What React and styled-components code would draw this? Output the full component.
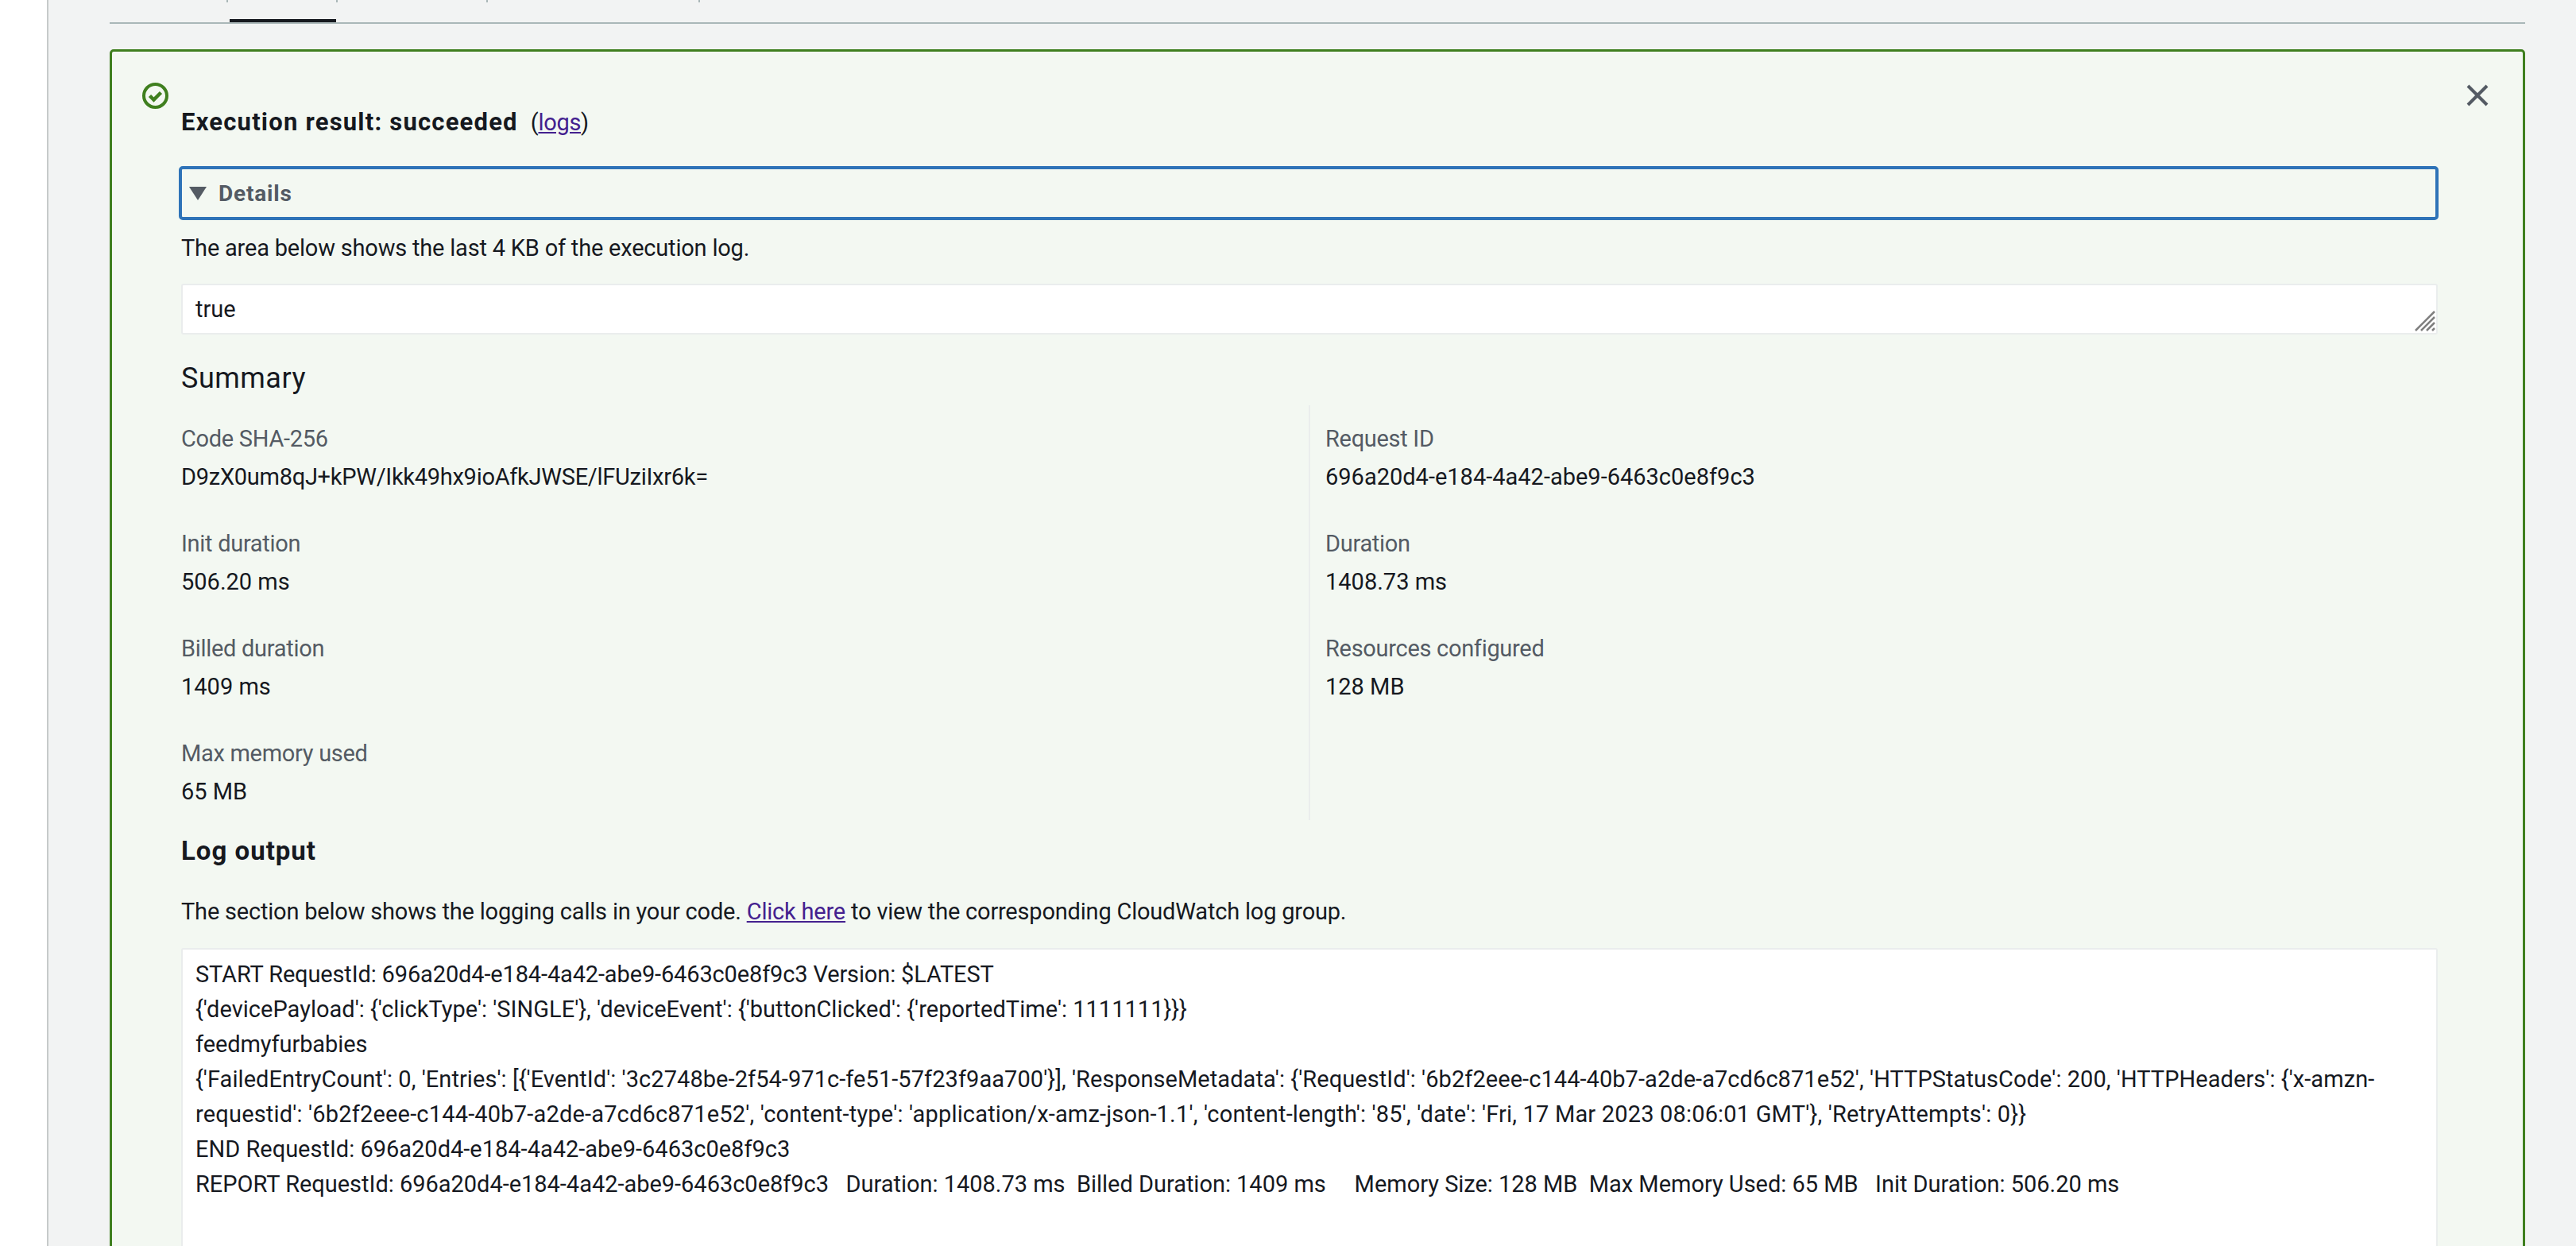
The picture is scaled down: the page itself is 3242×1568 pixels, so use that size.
import React from 'react'
import styled, { createGlobalStyle } from 'styled-components'

const GlobalStyle = createGlobalStyle`
  html, body { margin: 0; padding: 0; background: #fff; }
  body { font-family: Roboto, "Liberation Sans", Arial, sans-serif; color: #16191f; }
`

const Page = styled.div`
  display: flex; width: 3242px; height: 1568px; overflow: hidden;
`
const Nav = styled.div`
  width: 59px; flex: none; background: #fff; border-right: 2px solid #c6caca;
`
const Main = styled.div`
  flex: 1; background: #f2f3f3; padding: 0 64px 0 77px; min-width: 0;
`
const TabBar = styled.div`
  display: flex; height: 28px; border-bottom: 2px solid #aab7b8;
`
const Tab = styled.div`
  position: relative; height: 28px; box-sizing: border-box;
  width: ${p => p.$w}px;
  &::after {
    content: ''; position: absolute; right: 0; top: 0;
    width: 2px; height: 3px; background: #aab7b8;
  }
  ${p => p.$active && `
    &::before {
      content: ''; position: absolute; left: 2px; right: 2px; bottom: 0;
      height: 4px; background: #16191f;
    }
  `}
`
const Flash = styled.div`
  position: relative; margin-top: 32px; box-sizing: border-box; height: 1600px;
  background: #f3f8f2; border: 3px solid #3f7f1f; border-radius: 5px;
  padding: 67px 93px 0 87px;
`
const FlashIcon = styled.svg`
  position: absolute; left: 38px; top: 39px; width: 33px; height: 33px;
`
const CloseIcon = styled.svg`
  position: absolute; right: 41px; top: 39px; width: 32px; height: 32px;
`
const Title = styled.div`
  font-size: 31px; line-height: 44px; font-weight: 700; letter-spacing: 1.2px;
  span { font-size: 29px; font-weight: 400; margin-left: 16px; letter-spacing: -0.3px; }
`
const Link = styled.a`
  color: #44218f; text-decoration: underline;
`
const DetailsBar = styled.div`
  display: flex; align-items: center; gap: 15px; box-sizing: border-box;
  height: 68px; margin: 33px 0 0 -3px; width: 2844px; padding-left: 9px;
  border: 4px solid #2e73b8; border-radius: 5px;
  font-size: 28px; font-weight: 700; color: #545b64; letter-spacing: 0.8px;
`
const Body = styled.p`
  margin: ${p => p.$top}px 0 0; font-size: 29px; line-height: 44px; letter-spacing: -0.2px;
`
const TextBox = styled.div`
  position: relative; box-sizing: border-box; height: 64px; margin-top: 23px;
  padding: 8px 16px; width: 2840px; background: #fff;
  border: 2px solid #eaeded; border-radius: 3px;
  font-size: 29px; line-height: 44px;
`
const Grip = styled.svg`
  position: absolute; right: 1px; bottom: 2px; width: 26px; height: 26px;
`
const Summary = styled.h2`
  margin: 30px 0 0; font-size: 36px; line-height: 50px; font-weight: 400; letter-spacing: 0.5px;
`
const Columns = styled.div`
  display: grid; grid-template-columns: 1419px 1fr; width: 2840px; margin-top: 9px;
`
const Column = styled.div`
  padding: 20px 20px 0 ${p => (p.$divided ? '19px' : '0')};
  height: 522px; box-sizing: border-box;
  ${p => p.$divided && 'border-left: 2px solid #eaeded;'}
`
const Field = styled.div`
  height: 132px;
`
const Label = styled.div`
  font-size: 29px; line-height: 44px; color: #545b64; letter-spacing: -0.3px;
`
const Value = styled.div`
  font-size: 29px; line-height: 44px; margin-top: 4px;
  letter-spacing: ${p => p.$track}px;
`
const Heading = styled.h3`
  margin: 17px 0 0; font-size: 33px; line-height: 44px; font-weight: 700; letter-spacing: 1px;
`
const LogBox = styled.div`
  box-sizing: border-box; width: 2840px; height: 500px; margin-top: 24px;
  padding: 9px 16px; background: #fff; border: 2px solid #eaeded; border-radius: 3px;
  font-size: 29px; line-height: 44px;
`
const LogLine = styled.div`
  white-space: pre;
  letter-spacing: ${p => p.$track}px;
`

const leftFields = [
  ['Code SHA-256', 'D9zX0um8qJ+kPW/Ikk49hx9ioAfkJWSE/lFUziIxr6k=', -0.28],
  ['Init duration', '506.20 ms', 0],
  ['Billed duration', '1409 ms', 0],
  ['Max memory used', '65 MB', 0],
]
const rightFields = [
  ['Request ID', '696a20d4-e184-4a42-abe9-6463c0e8f9c3', 0],
  ['Duration', '1408.73 ms', 0],
  ['Resources configured', '128 MB', 0],
]
const logLines = [
  ['START RequestId: 696a20d4-e184-4a42-abe9-6463c0e8f9c3 Version: $LATEST', -0.14],
  ["{'devicePayload': {'clickType': 'SINGLE'}, 'deviceEvent': {'buttonClicked': {'reportedTime': 1111111}}}", 0.02],
  ['feedmyfurbabies', -0.1],
  ["{'FailedEntryCount': 0, 'Entries': [{'EventId': '3c2748be-2f54-971c-fe51-57f23f9aa700'}], 'ResponseMetadata': {'RequestId': '6b2f2eee-c144-40b7-a2de-a7cd6c871e52', 'HTTPStatusCode': 200, 'HTTPHeaders': {'x-amzn-", 0.06],
  ["requestid': '6b2f2eee-c144-40b7-a2de-a7cd6c871e52', 'content-type': 'application/x-amz-json-1.1', 'content-length': '85', 'date': 'Fri, 17 Mar 2023 08:06:01 GMT'}, 'RetryAttempts': 0}}", 0.18],
  ['END RequestId: 696a20d4-e184-4a42-abe9-6463c0e8f9c3', 0],
  ['REPORT RequestId: 696a20d4-e184-4a42-abe9-6463c0e8f9c3   Duration: 1408.73 ms  Billed Duration: 1409 ms     Memory Size: 128 MB  Max Memory Used: 65 MB   Init Duration: 506.20 ms', -0.02],
]

const renderFields = (fields) => fields.map(([label, value, track]) => (
  <Field key={label}>
    <Label>{label}</Label>
    <Value $track={track}>{value}</Value>
  </Field>
))

export default function App() {
  return (
    <>
      <GlobalStyle />
      <Page>
        <Nav />
        <Main>
          <TabBar>
            <Tab $w={149} />
            <Tab $w={138} $active />
            <Tab $w={189} />
            <Tab $w={267} />
          </TabBar>
          <Flash>
            <FlashIcon viewBox="0 0 33 33" fill="none">
              <circle cx="16.5" cy="16.5" r="14.5" stroke="#3f7f1f" strokeWidth="4" />
              <path d="M9.5 16.5l5 5 9-9" stroke="#3f7f1f" strokeWidth="4.5" />
            </FlashIcon>
            <CloseIcon viewBox="0 0 32 32" fill="none">
              <path d="M4 4l24 24M28 4L4 28" stroke="#545b64" strokeWidth="4" />
            </CloseIcon>
            <Title>Execution result: succeeded<span>(<Link>logs</Link>)</span></Title>
            <DetailsBar>
              <svg width="22" height="17" viewBox="0 0 22 17"><path d="M0 0h22L11 17z" fill="#545b64" /></svg>
              Details
            </DetailsBar>
            <Body $top={13}>The area below shows the last 4 KB of the execution log.</Body>
            <TextBox>
              true
              <Grip viewBox="0 0 26 26" fill="none">
                <path d="M1 25L25 1M8 25L25 8M15 25L25 15M22 25l3-3" stroke="#7f7f7f" strokeWidth="2.5" />
              </Grip>
            </TextBox>
            <Summary>Summary</Summary>
            <Columns>
              <Column>{renderFields(leftFields)}</Column>
              <Column $divided>{renderFields(rightFields)}</Column>
            </Columns>
            <Heading>Log output</Heading>
            <Body $top={32}>The section below shows the logging calls in your code. <Link>Click here</Link> to view the corresponding CloudWatch log group.</Body>
            <LogBox>
              {logLines.map(([line, track], i) => <LogLine key={i} $track={track}>{line}</LogLine>)}
            </LogBox>
          </Flash>
        </Main>
      </Page>
    </>
  )
}
